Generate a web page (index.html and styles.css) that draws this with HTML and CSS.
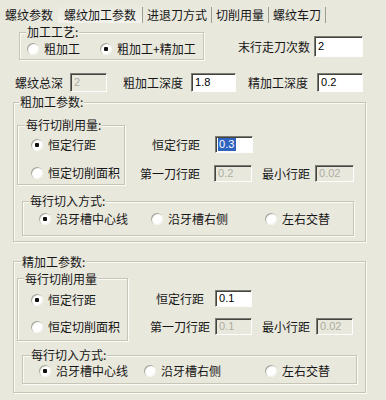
FILE: index.html
```html
<!DOCTYPE html>
<html>
<head>
<meta charset="utf-8">
<link rel="stylesheet" href="styles.css">
</head>
<body>
<div class="tabs">
  <div class="tab t1">螺纹参数</div>
  <div class="tab t2 active">螺纹加工参数</div>
  <div class="tab t3 sep">进退刀方式</div>
  <div class="tab t4 sep">切削用量</div>
  <div class="tab t5 sep last">螺纹车刀</div>
</div>
<div class="panel">
  <div class="row-a">
    <fieldset class="group craft">
      <legend>加工工艺:</legend>
      <div class="radios craft-radios">
        <div class="radio w73"><span class="dot"></span>粗加工</div>
        <div class="radio checked"><span class="dot"></span>粗加工+精加工</div>
      </div>
    </fieldset>
    <div class="pass">
      <span>末行走刀次数</span>
      <div class="field pass-field">2</div>
    </div>
  </div>

  <div class="row-b">
    <span>螺纹总深</span>
    <div class="field disabled f-total">2</div>
    <span class="ml16">粗加工深度</span>
    <div class="field f-rough">1.8</div>
    <span class="ml12">精加工深度</span>
    <div class="field f-fine">0.2</div>
  </div>

  <fieldset class="group section rough">
    <legend>粗加工参数:</legend>
    <div class="inner-row">
      <fieldset class="group amount">
        <legend>每行切削用量:</legend>
        <div class="radio checked r-first"><span class="dot"></span>恒定行距</div>
        <div class="radio r-second"><span class="dot"></span>恒定切削面积</div>
      </fieldset>
      <div class="right-col">
        <div class="frow r1">
          <span>恒定行距</span>
          <div class="field small sel-field"><span class="sel">0.3</span></div>
        </div>
        <div class="frow r2">
          <span>第一刀行距</span>
          <div class="field small disabled f-first">0.2</div>
          <span class="ml10">最小行距</span>
          <div class="field small disabled f-min">0.02</div>
        </div>
      </div>
    </div>
    <fieldset class="group cutin">
      <legend>每行切入方式:</legend>
      <div class="radios cut-radios">
        <div class="radio checked cw1"><span class="dot"></span>沿牙槽中心线</div>
        <div class="radio cw2"><span class="dot"></span>沿牙槽右侧</div>
        <div class="radio"><span class="dot"></span>左右交替</div>
      </div>
    </fieldset>
  </fieldset>

  <fieldset class="group section fine">
    <legend>精加工参数:</legend>
    <div class="inner-row">
      <fieldset class="group amount2">
        <legend>每行切削用量</legend>
        <div class="radio checked r-first2"><span class="dot"></span>恒定行距</div>
        <div class="radio r-second"><span class="dot"></span>恒定切削面积</div>
      </fieldset>
      <div class="right-col">
        <div class="frow r1b">
          <span>恒定行距</span>
          <div class="field small f-const2">0.1</div>
        </div>
        <div class="frow r2b">
          <span>第一刀行距</span>
          <div class="field small disabled f-first2">0.1</div>
          <span class="ml10">最小行距</span>
          <div class="field small disabled f-min2">0.02</div>
        </div>
      </div>
    </div>
    <fieldset class="group cutin2">
      <legend>每行切入方式:</legend>
      <div class="radios cut-radios2">
        <div class="radio checked cw1b"><span class="dot"></span>沿牙槽中心线</div>
        <div class="radio cw2b"><span class="dot"></span>沿牙槽右侧</div>
        <div class="radio"><span class="dot"></span>左右交替</div>
      </div>
    </fieldset>
  </fieldset>
</div>
</body>
</html>
```

FILE: styles.css
```css
html, body {
  margin: 0;
  padding: 0;
}
body {
  width: 386px;
  height: 400px;
  overflow: hidden;
  background: #e9e8dd;
  color: #161616;
  font-family: "Noto Sans CJK SC", "Noto Sans", sans-serif;
  font-size: 12px;
  line-height: 14px;
}

/* tabs */
.tabs {
  display: flex;
  padding-top: 7px;
  height: 16px;
}
.tab {
  box-sizing: border-box;
  height: 16px;
  line-height: 16px;
  text-align: center;
  white-space: nowrap;
}
.t1 { width: 58px; }
.t2 { width: 84px; }
.t3 { width: 69px; }
.t4 { width: 57px; }
.t5 { width: 58px; }
.tab.active {
  margin-top: -3px;
  height: 19px;
  padding-top: 3px;
  background: linear-gradient(#e9e8dd, #f3f2ec);
}
.tab.sep {
  border-left: 1px solid #9e9d92;
}
.tab.last {
  border-right: 1px solid #9e9d92;
}

.panel {
  padding-top: 2px;
}

/* group boxes */
.group {
  margin: 0;
  padding: 0;
  min-width: 0;
  box-sizing: border-box;
  border: 1px solid #c6c5b7;
  box-shadow: inset 1px 1px 0 #fbfbf8, 1px 1px 0 #fbfbf8;
}
legend {
  padding: 0 1px;
  line-height: 14px;
  background: #e9e8dd;
  white-space: nowrap;
}

/* radios */
.radios {
  display: flex;
}
.radio {
  display: flex;
  align-items: center;
  gap: 5px;
  height: 20px;
  white-space: nowrap;
}
.dot {
  flex: none;
  width: 12px;
  height: 12px;
  border-radius: 50%;
  background: radial-gradient(circle at 60% 60%, #ffffff 0%, #ffffff 45%, #ecebe4 100%);
  box-shadow: inset 1px 1px 0 #a9a89d, inset -1px -1px 0 #f4f4ef;
  display: flex;
  align-items: center;
  justify-content: center;
}
.radio.checked .dot::after {
  content: "";
  width: 4px;
  height: 4px;
  border-radius: 1px;
  background: #111;
}

/* fields */
.field {
  box-sizing: border-box;
  flex: none;
  background: #fff;
  border-top: 1px solid #7c7b74;
  border-left: 1px solid #7c7b74;
  border-bottom: 1px solid #fdfdfb;
  border-right: 1px solid #fdfdfb;
  box-shadow: inset 1px 1px 0 #44443f;
  font-family: "Liberation Sans", Arial, sans-serif;
  font-size: 11px;
  padding-left: 3px;
  height: 19px;
  line-height: 17px;
  color: #000;
}
.field.small {
  height: 17px;
  line-height: 15px;
}
.field.disabled {
  background: #e9e8dd;
  color: #aeada2;
}
.sel {
  display: inline-block;
  background: #2f63c0;
  color: #fff;
  padding: 0 2px 0 1px;
  margin-left: -1px;
  line-height: 13px;
}

/* row A */
.row-a {
  display: flex;
  height: 35px;
}
.craft {
  margin-left: 19px;
  width: 185px;
  height: 35px;
}
.craft legend {
  margin-left: 6px;
}
.craft-radios {
  padding-left: 7px;
}
.w73 { width: 73px; }
.pass {
  display: flex;
  align-items: center;
  margin-left: 34px;
  margin-top: 11px;
  height: 21px;
  gap: 4px;
}
.pass-field {
  width: 49px;
  height: 21px;
  line-height: 19px;
}

/* row B */
.row-b {
  display: flex;
  align-items: center;
  margin-top: 13px;
  height: 19px;
  padding-left: 15px;
}
.f-total { width: 37px; margin-left: 7px; }
.f-rough { width: 45px; margin-left: 8px; }
.f-fine { width: 46px; margin-left: 9px; }
.ml16 { margin-left: 16px; }
.ml12 { margin-left: 12px; }
.ml10 { margin-left: 10px; }

/* sections */
.section {
  margin-left: 13px;
  width: 353px;
}
.rough {
  margin-top: 3px;
  height: 147px;
}
.rough > legend { margin-left: 5px; }
.fine {
  margin-top: 13px;
  height: 138px;
}
.fine > legend {
  margin-left: 7px;
  line-height: 13px;
}

.inner-row {
  display: flex;
}
.rough .inner-row { margin-top: 9px; }
.fine .inner-row { margin-top: 4px; }

.amount {
  margin-left: 3px;
  width: 108px;
  height: 67px;
}
.amount legend { margin-left: 7px; }
.amount .radio { margin-left: 13px; }
.r-first { margin-top: 3px; }
.r-second { margin-top: 8px; }

.amount2 {
  margin-left: 3px;
  width: 111px;
  height: 69px;
}
.amount2 legend {
  margin-left: 6px;
  line-height: 13px;
}
.amount2 .radio { margin-left: 13px; }
.r-first2 { margin-top: 5px; }
.amount2 .r-second { margin-top: 7px; }

.right-col {
  display: flex;
  flex-direction: column;
}
.frow {
  display: flex;
  align-items: center;
  height: 17px;
  white-space: nowrap;
}
.r1 { margin-top: 18px; padding-left: 27px; }
.sel-field { margin-left: 15px; width: 38px; }
.r2 { margin-top: 12px; padding-left: 15px; }
.f-first { margin-left: 14px; width: 38px; }
.f-min { margin-left: 5px; width: 39px; }

.r1b { margin-top: 18px; padding-left: 28px; }
.f-const2 { margin-left: 11px; width: 37px; }
.r2b { margin-top: 11px; padding-left: 22px; }
.f-first2 { margin-left: 5px; width: 37px; }
.f-min2 { margin-left: 6px; width: 37px; }

.cutin {
  margin-top: 9px;
  margin-left: 8px;
  width: 332px;
  height: 42px;
}
.cutin legend { margin-left: 6px; }
.cut-radios {
  margin-top: 1px;
  padding-left: 16px;
}
.cw1 { width: 112px; }
.cw2 { width: 114px; }

.cutin2 {
  margin-top: 7px;
  margin-left: 8px;
  width: 335px;
  height: 36px;
}
.cutin2 legend { margin-left: 7px; }
.cut-radios2 {
  padding-left: 16px;
}
.cut-radios2 .radio { height: 18px; }
.cw1b { width: 105px; }
.cw2b { width: 121px; }
```
